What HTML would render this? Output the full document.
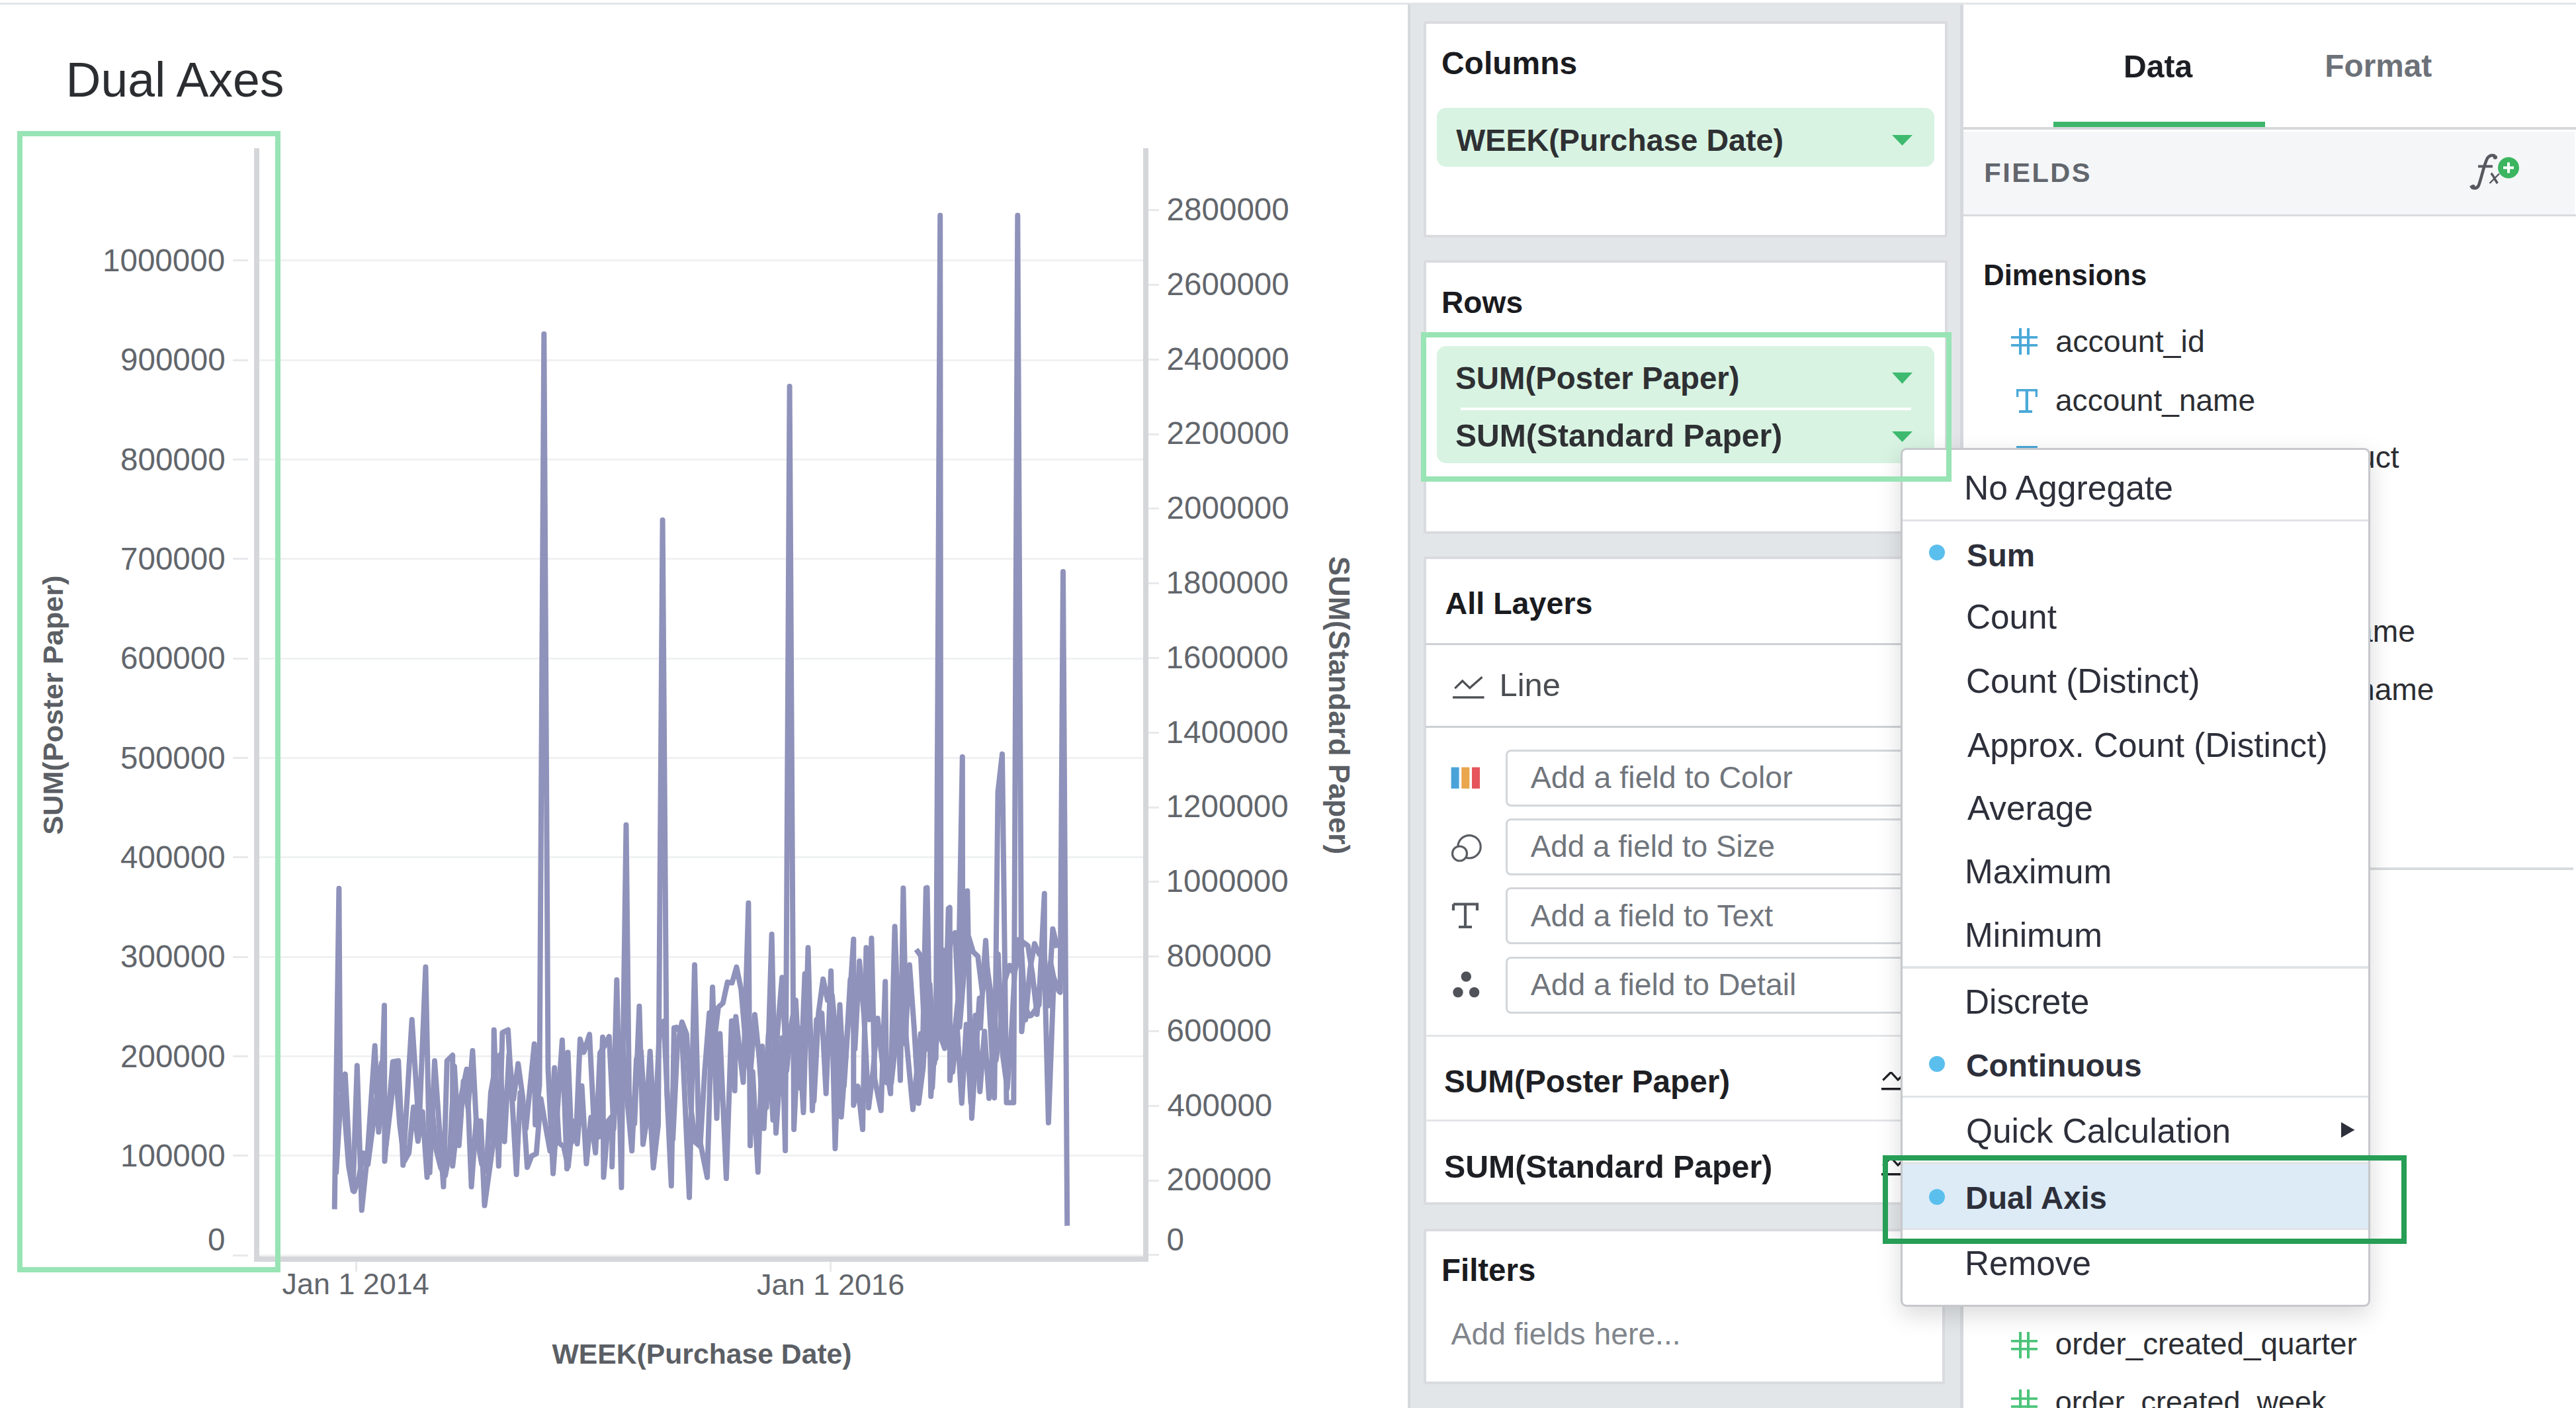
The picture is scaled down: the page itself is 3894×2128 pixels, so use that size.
<!DOCTYPE html>
<html><head><meta charset="utf-8"><style>
html,body{margin:0;padding:0;}
body{width:3894px;height:2128px;position:relative;overflow:hidden;background:#fff;font-family:"Liberation Sans",sans-serif;}
.t{position:absolute;white-space:nowrap;line-height:1;}
.b{position:absolute;}
</style></head><body>
<div class="b" style="left:0px;top:4px;width:3894px;height:3px;background:#e2e5e8"></div>
<div class="t" style="left:99.50px;top:85.36px;font-size:73.271px;font-weight:400;color:#2b2d31;">Dual Axes</div>
<div class="b" style="left:392px;top:392px;width:1336px;height:3px;background:#f0f1f3"></div>
<div class="b" style="left:352px;top:392px;width:23px;height:3px;background:#e8e9eb"></div>
<div class="t" style="left:155.00px;top:369.92px;font-size:47.577px;font-weight:400;color:#62666c;">1000000</div>
<div class="b" style="left:392px;top:543px;width:1336px;height:3px;background:#f0f1f3"></div>
<div class="b" style="left:352px;top:543px;width:23px;height:3px;background:#e8e9eb"></div>
<div class="t" style="left:182.00px;top:520.25px;font-size:47.577px;font-weight:400;color:#62666c;">900000</div>
<div class="b" style="left:392px;top:693px;width:1336px;height:3px;background:#f0f1f3"></div>
<div class="b" style="left:352px;top:693px;width:23px;height:3px;background:#e8e9eb"></div>
<div class="t" style="left:182.00px;top:670.58px;font-size:47.577px;font-weight:400;color:#62666c;">800000</div>
<div class="b" style="left:392px;top:843px;width:1336px;height:3px;background:#f0f1f3"></div>
<div class="b" style="left:352px;top:843px;width:23px;height:3px;background:#e8e9eb"></div>
<div class="t" style="left:182.00px;top:820.91px;font-size:47.577px;font-weight:400;color:#62666c;">700000</div>
<div class="b" style="left:392px;top:994px;width:1336px;height:3px;background:#f0f1f3"></div>
<div class="b" style="left:352px;top:994px;width:23px;height:3px;background:#e8e9eb"></div>
<div class="t" style="left:182.00px;top:971.24px;font-size:47.577px;font-weight:400;color:#62666c;">600000</div>
<div class="b" style="left:392px;top:1144px;width:1336px;height:3px;background:#f0f1f3"></div>
<div class="b" style="left:352px;top:1144px;width:23px;height:3px;background:#e8e9eb"></div>
<div class="t" style="left:182.00px;top:1121.57px;font-size:47.577px;font-weight:400;color:#62666c;">500000</div>
<div class="b" style="left:392px;top:1294px;width:1336px;height:3px;background:#f0f1f3"></div>
<div class="b" style="left:352px;top:1294px;width:23px;height:3px;background:#e8e9eb"></div>
<div class="t" style="left:182.00px;top:1271.90px;font-size:47.577px;font-weight:400;color:#62666c;">400000</div>
<div class="b" style="left:392px;top:1445px;width:1336px;height:3px;background:#f0f1f3"></div>
<div class="b" style="left:352px;top:1445px;width:23px;height:3px;background:#e8e9eb"></div>
<div class="t" style="left:182.00px;top:1422.23px;font-size:47.577px;font-weight:400;color:#62666c;">300000</div>
<div class="b" style="left:392px;top:1595px;width:1336px;height:3px;background:#f0f1f3"></div>
<div class="b" style="left:352px;top:1595px;width:23px;height:3px;background:#e8e9eb"></div>
<div class="t" style="left:182.00px;top:1572.56px;font-size:47.577px;font-weight:400;color:#62666c;">200000</div>
<div class="b" style="left:392px;top:1745px;width:1336px;height:3px;background:#f0f1f3"></div>
<div class="b" style="left:352px;top:1745px;width:23px;height:3px;background:#e8e9eb"></div>
<div class="t" style="left:182.00px;top:1722.89px;font-size:47.577px;font-weight:400;color:#62666c;">100000</div>
<div class="b" style="left:392px;top:1896px;width:1336px;height:3px;background:#f0f1f3"></div>
<div class="b" style="left:352px;top:1896px;width:23px;height:3px;background:#e8e9eb"></div>
<div class="t" style="left:314.00px;top:1850.32px;font-size:47.577px;font-weight:400;color:#62666c;">0</div>
<div class="b" style="left:1736px;top:316px;width:16px;height:3px;background:#e8e9eb"></div>
<div class="t" style="left:1763.60px;top:292.92px;font-size:47.577px;font-weight:400;color:#62666c;">2800000</div>
<div class="b" style="left:1736px;top:429px;width:16px;height:3px;background:#e8e9eb"></div>
<div class="t" style="left:1763.60px;top:405.72px;font-size:47.577px;font-weight:400;color:#62666c;">2600000</div>
<div class="b" style="left:1736px;top:542px;width:16px;height:3px;background:#e8e9eb"></div>
<div class="t" style="left:1763.60px;top:518.52px;font-size:47.577px;font-weight:400;color:#62666c;">2400000</div>
<div class="b" style="left:1736px;top:655px;width:16px;height:3px;background:#e8e9eb"></div>
<div class="t" style="left:1763.60px;top:631.32px;font-size:47.577px;font-weight:400;color:#62666c;">2200000</div>
<div class="b" style="left:1736px;top:767px;width:16px;height:3px;background:#e8e9eb"></div>
<div class="t" style="left:1763.60px;top:744.12px;font-size:47.577px;font-weight:400;color:#62666c;">2000000</div>
<div class="b" style="left:1736px;top:880px;width:16px;height:3px;background:#e8e9eb"></div>
<div class="t" style="left:1762.60px;top:856.92px;font-size:47.577px;font-weight:400;color:#62666c;">1800000</div>
<div class="b" style="left:1736px;top:993px;width:16px;height:3px;background:#e8e9eb"></div>
<div class="t" style="left:1762.60px;top:969.72px;font-size:47.577px;font-weight:400;color:#62666c;">1600000</div>
<div class="b" style="left:1736px;top:1106px;width:16px;height:3px;background:#e8e9eb"></div>
<div class="t" style="left:1762.60px;top:1082.52px;font-size:47.577px;font-weight:400;color:#62666c;">1400000</div>
<div class="b" style="left:1736px;top:1219px;width:16px;height:3px;background:#e8e9eb"></div>
<div class="t" style="left:1762.60px;top:1195.32px;font-size:47.577px;font-weight:400;color:#62666c;">1200000</div>
<div class="b" style="left:1736px;top:1331px;width:16px;height:3px;background:#e8e9eb"></div>
<div class="t" style="left:1762.60px;top:1308.12px;font-size:47.577px;font-weight:400;color:#62666c;">1000000</div>
<div class="b" style="left:1736px;top:1444px;width:16px;height:3px;background:#e8e9eb"></div>
<div class="t" style="left:1763.60px;top:1420.92px;font-size:47.577px;font-weight:400;color:#62666c;">800000</div>
<div class="b" style="left:1736px;top:1557px;width:16px;height:3px;background:#e8e9eb"></div>
<div class="t" style="left:1763.60px;top:1533.72px;font-size:47.577px;font-weight:400;color:#62666c;">600000</div>
<div class="b" style="left:1736px;top:1670px;width:16px;height:3px;background:#e8e9eb"></div>
<div class="t" style="left:1764.60px;top:1646.52px;font-size:47.577px;font-weight:400;color:#62666c;">400000</div>
<div class="b" style="left:1736px;top:1783px;width:16px;height:3px;background:#e8e9eb"></div>
<div class="t" style="left:1763.60px;top:1759.32px;font-size:47.577px;font-weight:400;color:#62666c;">200000</div>
<div class="b" style="left:1736px;top:1895px;width:16px;height:3px;background:#e8e9eb"></div>
<div class="t" style="left:1763.60px;top:1850.32px;font-size:47.577px;font-weight:400;color:#62666c;">0</div>
<div class="b" style="left:384px;top:224px;width:8px;height:1683px;background:#d5d6d9"></div>
<div class="b" style="left:384px;top:1899px;width:1352px;height:8px;background:#d5d6d9"></div>
<div class="b" style="left:1728px;top:224px;width:8px;height:1675px;background:#d5d6d9"></div>
<div class="b" style="left:537px;top:1907px;width:3px;height:15px;background:#e8e9eb"></div>
<div class="b" style="left:1254px;top:1907px;width:3px;height:15px;background:#e8e9eb"></div>
<div class="t" style="left:426.60px;top:1919.31px;font-size:44.868px;font-weight:400;color:#62666c;">Jan 1 2014</div>
<div class="t" style="left:1144.00px;top:1919.10px;font-size:45.112px;font-weight:400;color:#62666c;">Jan 1 2016</div>
<div class="t" style="left:834.50px;top:2025.25px;font-size:42.695px;font-weight:700;color:#5b5f65;">WEEK(Purchase Date)</div>
<svg class="b" style="left:0;top:0" width="1740" height="1900" viewBox="0 0 1740 1900"><polyline points="508.0,1774.5 514.9,1662.1 521.8,1623.4 528.6,1754.3 535.5,1800.8 542.4,1779.8 549.3,1742.7 556.2,1760.1 563.0,1707.6 569.9,1656.6 576.8,1606.5 583.7,1730.4 590.6,1671.0 597.4,1609.8 604.3,1699.9 611.2,1755.0 618.1,1742.5 625.0,1673.3 631.8,1724.8 638.7,1680.2 645.6,1779.2 652.5,1668.9 659.4,1738.0 666.2,1764.7 673.1,1776.7 680.0,1738.1 686.9,1611.8 693.8,1731.3 700.6,1633.9 707.5,1674.1 714.4,1588.1 721.3,1721.8 728.2,1759.3 735.0,1770.5 741.9,1651.1 748.8,1612.1 755.7,1594.5 762.6,1725.4 769.4,1593.7 776.3,1661.0 783.2,1607.6 790.1,1657.6 797.0,1764.3 803.8,1746.9 810.7,1743.9 817.6,1660.7 824.5,1701.0 831.4,1739.4 838.2,1613.8 845.1,1727.4 852.0,1732.9 858.9,1763.4 865.8,1694.6 872.6,1728.8 879.5,1641.3 886.4,1758.8 893.3,1688.7 900.2,1742.2 907.0,1591.4 913.9,1580.6 920.8,1566.6 927.7,1706.3 934.6,1571.7 941.4,1580.7 948.3,1664.1 955.2,1739.3 962.1,1600.6 969.0,1588.4 975.8,1703.8 982.7,1589.0 989.6,1719.1 996.5,1566.0 1003.4,1543.3 1010.2,1686.3 1017.1,1722.1 1024.0,1580.2 1030.9,1544.8 1037.8,1562.6 1044.6,1676.5 1051.5,1726.8 1058.4,1732.6 1065.3,1618.9 1072.2,1530.9 1079.0,1579.2 1085.9,1522.2 1092.8,1516.1 1099.7,1484.4 1106.6,1485.5 1113.4,1461.7 1120.3,1495.6 1127.2,1578.0 1134.1,1626.8 1141.0,1533.4 1147.8,1600.6 1154.7,1705.5 1161.6,1563.7 1168.5,1692.7 1175.4,1557.7 1182.2,1477.2 1189.1,1618.0 1196.0,1549.2 1202.9,1511.8 1209.8,1644.6 1216.6,1471.8 1223.5,1533.4 1230.4,1664.0 1237.3,1531.0 1244.2,1479.7 1251.0,1511.7 1257.9,1504.1 1264.8,1580.0 1271.7,1687.9 1278.6,1595.7 1285.4,1480.2 1292.3,1585.4 1299.2,1452.4 1306.1,1535.8 1313.0,1674.3 1319.8,1618.2 1326.7,1539.0 1333.6,1604.7 1340.5,1636.3 1347.4,1636.0 1354.2,1573.7 1361.1,1486.3 1368.0,1577.3 1374.9,1458.2 1381.8,1552.8 1388.6,1667.4 1395.5,1613.0 1402.4,1491.0 1409.3,1644.0 1416.2,1517.6 1423.0,1438.0 1429.9,1537.0 1436.8,1418.6 1443.7,1409.7 1450.6,1552.3 1457.4,1466.7 1464.3,1416.0 1471.2,1438.8 1478.1,1445.1 1485.0,1500.2 1491.8,1459.3 1498.7,1507.9 1505.6,1602.4 1512.5,1552.2 1519.4,1480.5 1526.2,1459.1 1533.1,1471.8 1540.0,1444.1 1546.9,1424.3 1553.8,1429.2 1560.6,1471.3 1567.5,1533.1 1574.4,1458.9 1581.3,1495.8 1588.2,1454.5 1595.0,1489.1 1601.9,1490.0" fill="none" stroke="#8f92ba" stroke-width="8" stroke-linejoin="round" stroke-linecap="butt"/><polyline points="1385.0,1434.9 1391.9,1444.6 1398.8,1586.1 1405.6,1487.5 1412.5,1607.0 1419.4,1534.3 1426.3,1436.3 1433.2,1504.8 1440.0,1620.2 1446.9,1553.0 1453.8,1667.3 1460.7,1548.2 1467.6,1666.8 1474.4,1534.5 1481.3,1649.7 1488.2,1558.7 1495.1,1659.9 1502.0,1565.6 1508.8,1442.3 1515.7,1594.3 1522.6,1645.0 1529.5,1551.8 1536.4,1420.9 1543.2,1419.4 1550.1,1541.3 1557.0,1464.9 1563.9,1426.3 1570.8,1441.9 1577.6,1430.0 1584.5,1520.0 1591.4,1404.0 1598.3,1432.5" fill="none" stroke="#8f92ba" stroke-width="8" stroke-linejoin="round" stroke-linecap="butt"/><polyline points="505.7,1827.6 512.4,1342.7 514.2,1634.6 521.3,1688.5 527.0,1762.0 533.5,1799.2 539.8,1610.4 546.8,1829.0 555.4,1745.3 566.7,1580.6 572.4,1711.0 576.7,1660.0 581.0,1519.6 581.5,1755.0 593.7,1604.7 602.2,1603.3 609.3,1761.0 622.7,1540.9 633.4,1705.5 643.4,1461.4 649.6,1772.3 657.0,1603.3 670.4,1793.6 675.7,1603.3 684.2,1594.8 684.2,1762.3 694.1,1671.5 705.5,1616.0 712.6,1793.6 719.7,1694.2 726.8,1694.2 732.5,1822.0 745.2,1729.7 746.7,1556.5 753.8,1762.3 759.4,1560.7 768.0,1556.5 780.7,1775.0 786.4,1651.6 795.0,1705.5 807.7,1577.8 809.1,1699.9 815.5,1640.0 822.3,504.8 828.5,1614.7 836.1,1773.7 849.9,1571.9 857.0,1766.4 858.5,1590.4 864.1,1726.6 871.2,1706.8 876.9,1570.5 882.6,1590.4 891.1,1563.4 898.2,1703.9 905.3,1718.1 911.0,1567.6 912.4,1779.2 919.5,1694.0 925.2,1686.9 925.2,1763.5 932.3,1481.0 939.4,1794.8 941.0,1640.0 946.5,1246.8 951.0,1655.7 959.2,1698.3 966.4,1520.8 972.0,1729.5 982.0,1664.2 987.6,1765.0 995.0,1700.0 1001.6,786.0 1008.0,1647.0 1014.8,1792.3 1018.9,1553.4 1022.8,1552.6 1030.8,1562.2 1042.0,1809.8 1050.0,1458.3 1056.3,1715.6 1069.1,1779.5 1077.1,1491.9 1083.5,1690.0 1088.3,1562.2 1097.9,1781.1 1105.9,1543.0 1110.7,1648.5 1112.3,1536.6 1123.5,1635.7 1131.4,1364.8 1134.0,1731.5 1137.8,1619.7 1145.8,1771.5 1152.2,1581.3 1158.6,1674.0 1166.6,1412.0 1173.0,1712.4 1182.6,1568.6 1187.1,1739.0 1193.6,583.9 1200.1,1707.0 1207.2,1553.7 1214.5,1681.5 1221.5,1432.3 1228.0,1678.4 1234.3,1541.0 1242.3,1531.3 1248.7,1652.8 1256.1,1467.4 1262.5,1735.9 1269.5,1518.6 1275.9,1641.6 1290.3,1419.5 1290.3,1670.4 1296.7,1641.6 1304.0,1707.1 1309.4,1432.3 1314.2,1541.0 1317.4,1417.9 1322.2,1630.4 1331.8,1678.4 1338.2,1483.4 1339.8,1611.2 1346.2,1652.8 1352.6,1400.3 1361.0,1632.8 1365.4,1342.2 1369.8,1569.0 1380.0,1676.8 1391.8,1562.3 1394.0,1621.8 1399.8,1342.2 1401.5,1341.7 1407.2,1657.0 1410.4,1598.0 1414.7,1600.0 1421.2,325.5 1422.4,1568.3 1428.0,1584.4 1433.7,1373.0 1435.8,1371.5 1435.9,1632.8 1438.8,1601.0 1448.3,1509.5 1454.8,1144.0 1455.2,1490.8 1462.3,1346.6 1468.9,1690.0 1480.5,1508.7 1482.1,1553.5 1486.5,1472.9 1490.0,1421.4 1503.2,1659.2 1508.5,1196.9 1515.0,1139.6 1521.5,1666.4 1532.3,1666.4 1538.3,325.5 1544.4,1559.0 1548.5,1520.6 1549.0,1517.6 1555.0,1535.5 1558.6,1534.8 1570.7,1518.6 1572.9,1467.0 1578.8,1350.6 1578.9,1461.0 1584.9,1696.8 1593.0,1478.0 1601.0,1498.4 1602.7,1499.7 1607.0,864.0 1613.2,1852.6" fill="none" stroke="#8f92ba" stroke-width="8" stroke-linejoin="round" stroke-linecap="butt"/></svg>
<div class="t" style="left:-115.6px;top:1044.3px;font-size:43.3px;font-weight:700;color:#5b5f65;transform-origin:196.1px 21.6px;transform:rotate(-90deg)">SUM(Poster Paper)</div>
<div class="t" style="left:1798.9px;top:1044.1px;font-size:43.8px;font-weight:700;color:#5b5f65;transform-origin:225.1px 21.9px;transform:rotate(90deg)">SUM(Standard Paper)</div>
<div class="b" style="left:26px;top:198px;width:398px;height:1725px;border:8px solid #98e4b4;box-sizing:border-box"></div>
<div class="b" style="left:2128px;top:7px;width:840px;height:2121px;background:#e3e6e9;border-left:4px solid #d5d8dc;border-right:5px solid #d5d8dc;box-sizing:border-box"></div>
<div class="b" style="left:2152px;top:32px;width:792px;height:327px;background:#fff;border:4px solid #d9dbdf;border-radius:3px;box-sizing:border-box"></div>
<div class="t" style="left:2179.00px;top:71.90px;font-size:47.951px;font-weight:700;color:#1a1b20;">Columns</div>
<div class="b" style="left:2172px;top:163px;width:752px;height:89px;background:#d8f3e2;border-radius:14px"></div>
<div class="t" style="left:2201.30px;top:189.32px;font-size:46.627px;font-weight:700;color:#2e3033;">WEEK(Purchase Date)</div>
<svg class="b" style="left:2860px;top:204px" width="31" height="16"><polygon points="0,0 31,0 15.5,16" fill="#3dba6f"/></svg>
<div class="b" style="left:2152px;top:393px;width:792px;height:414px;background:#fff;border:4px solid #d9dbdf;border-radius:3px;box-sizing:border-box"></div>
<div class="t" style="left:2179.00px;top:433.52px;font-size:46.151px;font-weight:700;color:#1a1b20;">Rows</div>
<div class="b" style="left:2172px;top:523px;width:752px;height:177px;background:#d8f3e2;border-radius:14px"></div>
<div class="b" style="left:2208px;top:616px;width:681px;height:4px;background:#fff"></div>
<div class="t" style="left:2200.00px;top:547.74px;font-size:47.434px;font-weight:700;color:#2e3033;">SUM(Poster Paper)</div>
<div class="t" style="left:2200.00px;top:634.48px;font-size:48.094px;font-weight:700;color:#2e3033;">SUM(Standard Paper)</div>
<svg class="b" style="left:2860px;top:563px" width="31" height="17"><polygon points="0,0 31,0 15.5,17" fill="#3dba6f"/></svg>
<svg class="b" style="left:2860px;top:652px" width="31" height="16"><polygon points="0,0 31,0 15.5,16" fill="#3dba6f"/></svg>
<div class="b" style="left:2152px;top:841px;width:792px;height:980px;background:#fff;border:4px solid #d9dbdf;border-radius:3px;box-sizing:border-box"></div>
<div class="t" style="left:2184.60px;top:888.51px;font-size:46.636px;font-weight:700;color:#1a1b20;">All Layers</div>
<div class="b" style="left:2155px;top:972px;width:786px;height:3px;background:#cdd0d4"></div>
<svg class="b" style="left:2190px;top:1015px" width="60" height="45"><polyline points="9.3,25.3 20.7,14 31.8,24.8 50.5,8.3" fill="none" stroke="#4d4f53" stroke-width="3.2"/><rect x="6" y="37.3" width="47.6" height="3.4" fill="#4d4f53"/></svg>
<div class="t" style="left:2266.50px;top:1010.65px;font-size:48.832px;font-weight:400;color:#4a4d52;">Line</div>
<div class="b" style="left:2155px;top:1097px;width:786px;height:3px;background:#cdd0d4"></div>
<div class="b" style="left:2276px;top:1133px;width:684px;height:86px;background:#fff;border:3px solid #d3d6da;border-radius:8px;box-sizing:border-box"></div>
<div class="t" style="left:2313.80px;top:1152.38px;font-size:46.553px;font-weight:400;color:#70757c;">Add a field to Color</div>
<div class="b" style="left:2276px;top:1237px;width:684px;height:86px;background:#fff;border:3px solid #d3d6da;border-radius:8px;box-sizing:border-box"></div>
<div class="t" style="left:2313.80px;top:1257.10px;font-size:45.826px;font-weight:400;color:#70757c;">Add a field to Size</div>
<div class="b" style="left:2276px;top:1341px;width:684px;height:86px;background:#fff;border:3px solid #d3d6da;border-radius:8px;box-sizing:border-box"></div>
<div class="t" style="left:2313.80px;top:1360.88px;font-size:46.200px;font-weight:400;color:#70757c;">Add a field to Text</div>
<div class="b" style="left:2276px;top:1446px;width:684px;height:86px;background:#fff;border:3px solid #d3d6da;border-radius:8px;box-sizing:border-box"></div>
<div class="t" style="left:2313.80px;top:1464.89px;font-size:46.316px;font-weight:400;color:#70757c;">Add a field to Detail</div>
<svg class="b" style="left:2193px;top:1159px" width="46" height="34"><rect x="0.6" y="0.6" width="12" height="32.2" fill="#4aa3d8"/><rect x="16.3" y="0.6" width="12" height="32.2" fill="#e9a64c"/><rect x="32" y="0.6" width="12" height="32.2" fill="#e5555b"/></svg>
<svg class="b" style="left:2180px;top:1240px" width="80" height="80"><circle cx="41" cy="39.8" r="17.2" fill="none" stroke="#5a5d63" stroke-width="3.2"/><circle cx="26.5" cy="50" r="11" fill="#fff" stroke="#5a5d63" stroke-width="3.2"/></svg>
<svg class="b" style="left:2190px;top:1360px" width="50" height="50"><path d="M7 6.5 H43 V16 M7 6.5 V16 M25 6.5 V41 M15 41 H35" fill="none" stroke="#55595f" stroke-width="4.2"/></svg>
<svg class="b" style="left:2190px;top:1460px" width="50" height="50"><circle cx="26.3" cy="16" r="7.7" fill="#4f5258"/><circle cx="14" cy="39.8" r="7.7" fill="#4f5258"/><circle cx="38.6" cy="39.8" r="7.7" fill="#4f5258"/></svg>
<div class="b" style="left:2155px;top:1564px;width:786px;height:3px;background:#e3e5e8"></div>
<div class="t" style="left:2183.00px;top:1611.38px;font-size:47.734px;font-weight:700;color:#1e1f24;">SUM(Poster Paper)</div>
<div class="b" style="left:2155px;top:1692px;width:786px;height:3px;background:#e3e5e8"></div>
<div class="t" style="left:2183.00px;top:1739.11px;font-size:48.294px;font-weight:700;color:#1e1f24;">SUM(Standard Paper)</div>
<svg class="b" style="left:2844px;top:1620px" width="36" height="32"><polyline points="2.3,12.6 14.4,0.5 25,12 31.4,6" fill="none" stroke="#1f2024" stroke-width="3.2"/><rect x="0" y="24" width="31.4" height="3.5" fill="#1f2024"/></svg>
<svg class="b" style="left:2844px;top:1749px" width="36" height="32"><polyline points="2.3,12.6 14.4,0.5 25,12 31.4,6" fill="none" stroke="#1f2024" stroke-width="3.2"/><rect x="0" y="24" width="31.4" height="3.5" fill="#1f2024"/></svg>
<div class="b" style="left:2152px;top:1857px;width:788px;height:235px;background:#fff;border:4px solid #d9dbdf;border-radius:3px;box-sizing:border-box"></div>
<div class="t" style="left:2179.00px;top:1895.85px;font-size:47.419px;font-weight:700;color:#1a1b20;">Filters</div>
<div class="t" style="left:2193.60px;top:1993.23px;font-size:46.258px;font-weight:400;color:#80858c;">Add fields here...</div>
<div class="b" style="left:2968px;top:7px;width:926px;height:2121px;background:#fff"></div>
<div class="t" style="left:3210.00px;top:75.77px;font-size:48.108px;font-weight:700;color:#1c1e24;">Data</div>
<div class="t" style="left:3514.30px;top:76.03px;font-size:47.802px;font-weight:700;color:#6d7178;">Format</div>
<div class="b" style="left:3104px;top:184px;width:320px;height:8px;background:#3db56a"></div>
<div class="b" style="left:2968px;top:192px;width:926px;height:4px;background:#d6d8dc"></div>
<div class="b" style="left:2968px;top:199px;width:924px;height:125px;background:#f5f6f8"></div>
<div class="b" style="left:2968px;top:324px;width:926px;height:3px;background:#d9dcdf"></div>
<div class="t" style="left:2999.30px;top:240.40px;font-size:41.578px;font-weight:700;color:#62666d;letter-spacing:2.5px;">FIELDS</div>
<svg class="b" style="left:3720px;top:220px" width="100" height="80"><path d="M 15.5 60.5 C 16.5 65.5, 23.5 66, 26.5 61 C 30 54, 36 24, 40.5 18.5 C 43 15, 47 14, 51.5 15.5" fill="none" stroke="#55585e" stroke-width="4.6" stroke-linecap="butt"/><circle cx="51.8" cy="17.6" r="3.2" fill="#55585e"/><circle cx="18.5" cy="62.3" r="3.2" fill="#55585e"/><rect x="26" y="29.5" width="22" height="3.9" fill="#55585e"/><path d="M 45.5 42 C 49 44, 51 52, 55.5 57" fill="none" stroke="#55585e" stroke-width="3.6"/><path d="M 58 42.5 L 43.5 57" fill="none" stroke="#55585e" stroke-width="2.4"/><circle cx="72" cy="33.5" r="16" fill="#3bb560"/><rect x="64" y="31.5" width="16" height="4" fill="#fff"/><rect x="70" y="25.5" width="4" height="16" fill="#fff"/></svg>
<div class="t" style="left:2998.30px;top:394.81px;font-size:43.572px;font-weight:700;color:#1a1b20;">Dimensions</div>
<svg class="b" style="left:3040px;top:496px" width="42" height="42"><rect x="12" y="0" width="4" height="40" fill="#4aa8d8"/><rect x="24" y="0" width="4" height="40" fill="#4aa8d8"/><rect x="0" y="12" width="40" height="3.7" fill="#4aa8d8"/><rect x="0" y="24" width="40" height="3.7" fill="#4aa8d8"/></svg>
<div class="t" style="left:3107.30px;top:492.71px;font-size:46.645px;font-weight:400;color:#2c2e33;">account_id</div>
<svg class="b" style="left:3044px;top:588px" width="40" height="40"><path d="M4 0 H36 V3.4 H4 Z M4 0 H7.3 V12 H4 Z M32.7 0 H36 V12 H32.7 Z M17.7 0 H22 V34 H17.7 Z M8 32 H28 V36 H8 Z" fill="#4aa8d8"/></svg>
<div class="t" style="left:3107.00px;top:581.80px;font-size:46.064px;font-weight:400;color:#2c2e33;">account_name</div>
<svg class="b" style="left:3044px;top:674px" width="40" height="40"><path d="M4 0 H36 V3.4 H4 Z M4 0 H7.3 V12 H4 Z M32.7 0 H36 V12 H32.7 Z M17.7 0 H22 V34 H17.7 Z M8 32 H28 V36 H8 Z" fill="#4aa8d8"/></svg>
<svg class="b" style="left:3044px;top:762px" width="40" height="40"><path d="M4 0 H36 V3.4 H4 Z M4 0 H7.3 V12 H4 Z M32.7 0 H36 V12 H32.7 Z M17.7 0 H22 V34 H17.7 Z M8 32 H28 V36 H8 Z" fill="#4aa8d8"/></svg>
<svg class="b" style="left:3044px;top:850px" width="40" height="40"><path d="M4 0 H36 V3.4 H4 Z M4 0 H7.3 V12 H4 Z M32.7 0 H36 V12 H32.7 Z M17.7 0 H22 V34 H17.7 Z M8 32 H28 V36 H8 Z" fill="#4aa8d8"/></svg>
<svg class="b" style="left:3044px;top:938px" width="40" height="40"><path d="M4 0 H36 V3.4 H4 Z M4 0 H7.3 V12 H4 Z M32.7 0 H36 V12 H32.7 Z M17.7 0 H22 V34 H17.7 Z M8 32 H28 V36 H8 Z" fill="#4aa8d8"/></svg>
<svg class="b" style="left:3044px;top:1025px" width="40" height="40"><path d="M4 0 H36 V3.4 H4 Z M4 0 H7.3 V12 H4 Z M32.7 0 H36 V12 H32.7 Z M17.7 0 H22 V34 H17.7 Z M8 32 H28 V36 H8 Z" fill="#4aa8d8"/></svg>
<div class="t" style="left:3565.00px;top:667.88px;font-size:46.200px;font-weight:400;color:#2c2e33;">uct</div>
<div class="t" style="left:3535.40px;top:931.48px;font-size:46.200px;font-weight:400;color:#2c2e33;">name</div>
<div class="t" style="left:3564.00px;top:1019.48px;font-size:46.200px;font-weight:400;color:#2c2e33;">name</div>
<div class="b" style="left:2968px;top:1311px;width:922px;height:4px;background:#d9dcdf"></div>
<svg class="b" style="left:3040px;top:2013px" width="42" height="42"><rect x="12" y="0" width="4" height="40" fill="#4cc47a"/><rect x="24" y="0" width="4" height="40" fill="#4cc47a"/><rect x="0" y="12" width="40" height="3.7" fill="#4cc47a"/><rect x="0" y="24" width="40" height="3.7" fill="#4cc47a"/></svg>
<div class="t" style="left:3106.70px;top:2008.78px;font-size:45.844px;font-weight:400;color:#2c2e33;">order_created_quarter</div>
<svg class="b" style="left:3040px;top:2100px" width="42" height="42"><rect x="12" y="0" width="4" height="40" fill="#4cc47a"/><rect x="24" y="0" width="4" height="40" fill="#4cc47a"/><rect x="0" y="12" width="40" height="3.7" fill="#4cc47a"/><rect x="0" y="24" width="40" height="3.7" fill="#4cc47a"/></svg>
<div class="t" style="left:3106.70px;top:2096.93px;font-size:44.958px;font-weight:400;color:#2c2e33;">order_created_week</div>
<div class="b" style="left:2873px;top:677px;width:710px;height:1298px;background:#fff;border:3px solid #c6c8cc;border-radius:9px;box-sizing:border-box;box-shadow:0 12px 36px rgba(0,0,0,0.15)"></div>
<div class="t" style="left:2969.00px;top:711.83px;font-size:51.701px;font-weight:400;color:#2d2f3a;">No Aggregate</div>
<div class="b" style="left:2876px;top:785px;width:704px;height:3px;background:#e1e3e6"></div>
<div class="t" style="left:2973.00px;top:815.90px;font-size:47.600px;font-weight:700;color:#2d2f3a;">Sum</div>
<div class="b" style="left:2915.5px;top:823.4000000000001px;width:24px;height:24px;border-radius:50%;background:#5bbfee"></div>
<div class="t" style="left:2972.00px;top:907.37px;font-size:51.300px;font-weight:400;color:#2d2f3a;">Count</div>
<div class="t" style="left:2972.00px;top:1004.37px;font-size:51.300px;font-weight:400;color:#2d2f3a;">Count (Distinct)</div>
<div class="t" style="left:2974.00px;top:1100.87px;font-size:51.300px;font-weight:400;color:#2d2f3a;">Approx. Count (Distinct)</div>
<div class="t" style="left:2974.00px;top:1195.77px;font-size:51.300px;font-weight:400;color:#2d2f3a;">Average</div>
<div class="t" style="left:2970.00px;top:1291.67px;font-size:51.300px;font-weight:400;color:#2d2f3a;">Maximum</div>
<div class="t" style="left:2970.00px;top:1387.57px;font-size:51.300px;font-weight:400;color:#2d2f3a;">Minimum</div>
<div class="b" style="left:2876px;top:1460px;width:704px;height:4px;background:#e1e3e6"></div>
<div class="t" style="left:2970.00px;top:1488.55px;font-size:51.321px;font-weight:400;color:#2d2f3a;">Discrete</div>
<div class="t" style="left:2972.00px;top:1587.19px;font-size:47.848px;font-weight:700;color:#2d2f3a;">Continuous</div>
<div class="b" style="left:2915.5px;top:1596px;width:24px;height:24px;border-radius:50%;background:#5bbfee"></div>
<div class="b" style="left:2876px;top:1656px;width:704px;height:3px;background:#e1e3e6"></div>
<div class="t" style="left:2972.00px;top:1683.76px;font-size:51.430px;font-weight:400;color:#2d2f3a;">Quick Calculation</div>
<svg class="b" style="left:3539px;top:1696px" width="21" height="24"><polygon points="0,0 20.5,11.75 0,23.5" fill="#2d2f3a"/></svg>
<div class="b" style="left:2876px;top:1756px;width:704px;height:4px;background:#e1e3e6"></div>
<div class="b" style="left:2876px;top:1760px;width:704px;height:96px;background:#dcebf6"></div>
<div class="b" style="left:2876px;top:1856px;width:704px;height:3px;background:#e1e3e6"></div>
<div class="t" style="left:2971.00px;top:1786.92px;font-size:47.332px;font-weight:700;color:#2d2f3a;">Dual Axis</div>
<div class="b" style="left:2915.5px;top:1796.5px;width:24px;height:24px;border-radius:50%;background:#5bbfee"></div>
<div class="t" style="left:2970.00px;top:1883.87px;font-size:51.300px;font-weight:400;color:#2d2f3a;">Remove</div>
<div class="b" style="left:2846px;top:1746px;width:792px;height:134px;border:8.5px solid #279e56;box-sizing:border-box"></div>
<div class="b" style="left:2148px;top:502px;width:802px;height:226px;border:8px solid #98e4b4;box-sizing:border-box"></div>

</body></html>
